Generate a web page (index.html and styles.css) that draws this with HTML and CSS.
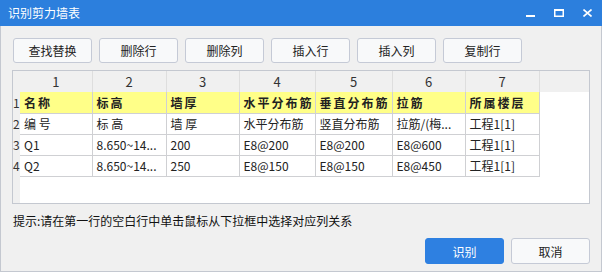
FILE: index.html
```html
<!DOCTYPE html>
<html lang="zh-CN">
<head>
  <meta charset="UTF-8">
  <title>识别剪力墙表</title>
  <link rel="stylesheet" href="styles.css">
</head>
<body>

  <div class="window">

    <!-- Title bar -->
    <div class="titlebar">
      <span class="title">识别剪力墙表</span>
      <div class="controls">
        <svg width="9" height="3" viewBox="0 0 9 3"><rect x="0" y="0" width="9" height="2" fill="#fff"/></svg>
        <svg width="10" height="8" viewBox="0 0 10 8"><rect x="0.75" y="0.75" width="8.5" height="6.5" fill="none" stroke="#fff" stroke-width="1.5"/><rect x="0" y="0" width="10" height="2" fill="#fff"/></svg>
        <svg width="9" height="8" viewBox="0 0 9 8"><path d="M0.5 0.5 L8.5 7.5 M8.5 0.5 L0.5 7.5" stroke="#fff" stroke-width="1.6"/></svg>
      </div>
    </div>

    <div class="content">

      <!-- Toolbar -->
      <div class="toolbar">
        <button class="btn">查找替换</button>
        <button class="btn">删除行</button>
        <button class="btn">删除列</button>
        <button class="btn">插入行</button>
        <button class="btn">插入列</button>
        <button class="btn">复制行</button>
      </div>

      <!-- Grid -->
      <div class="grid">
        <table class="sheet">
          <colgroup>
            <col class="c-num">
            <col style="width:72px">
            <col style="width:74px">
            <col style="width:73px">
            <col style="width:76px">
            <col style="width:77px">
            <col style="width:73px">
            <col style="width:74px">
          </colgroup>
          <tr class="head">
            <th class="num"></th>
            <th>1</th><th>2</th><th>3</th><th>4</th><th>5</th><th>6</th><th>7</th>
          </tr>
          <tr class="pick">
            <td class="num">1</td>
            <td>名称</td><td>标高</td><td>墙厚</td><td>水平分布筋</td><td>垂直分布筋</td><td>拉筋</td><td>所属楼层</td>
          </tr>
          <tr>
            <td class="num">2</td>
            <td>编 号</td><td>标 高</td><td>墙 厚</td><td>水平分布筋</td><td>竖直分布筋</td><td>拉筋/(梅...</td><td>工程1[1]</td>
          </tr>
          <tr>
            <td class="num">3</td>
            <td>Q1</td><td>8.650~14...</td><td>200</td><td>E8@200</td><td>E8@200</td><td>E8@600</td><td>工程1[1]</td>
          </tr>
          <tr>
            <td class="num">4</td>
            <td>Q2</td><td>8.650~14...</td><td>250</td><td>E8@150</td><td>E8@150</td><td>E8@450</td><td>工程1[1]</td>
          </tr>
        </table>
      </div>

      <p class="hint">提示:请在第一行的空白行中单击鼠标从下拉框中选择对应列关系</p>

      <!-- Footer -->
      <div class="footer">
        <button class="btn primary">识别</button>
        <button class="btn">取消</button>
      </div>

    </div>
  </div>

</body>
</html>
```

FILE: styles.css
```css
/* Basic */
* {
  box-sizing: border-box;
}
body {
  margin: 0;
  background: #fff;
  font-family: "Noto Sans CJK SC", "Liberation Sans", sans-serif;
  color: #222;
}

/* Window */
.window {
  width: 602px;
  height: 272px;
  border: 1px solid #c4c8d0;
  border-top: none;
  background: #f0f0f0;
  display: flex;
  flex-direction: column;
}
.titlebar {
  height: 26px;
  margin: 0 -1px;
  background: #2c7fdd;
  color: #fff;
  display: flex;
  align-items: center;
  justify-content: space-between;
  padding: 0 10px 0 8px;
}
.title {
  font-size: 12px;
  line-height: 1;
}
.controls {
  display: flex;
  align-items: center;
  gap: 19px;
}
.controls svg:first-child {
  margin-top: 7px;
}

/* Content */
.content {
  flex: 1;
  padding: 12px 11px 0 11px;
  display: flex;
  flex-direction: column;
}

/* Buttons */
.btn {
  height: 25px;
  width: 79px;
  border: 1px solid #c5cad6;
  border-radius: 3px;
  background: #f8f9fa;
  font-family: inherit;
  font-size: 12px;
  color: #222;
  padding: 0;
}
.btn.primary {
  background: #2e80e1;
  border-color: #2e80e1;
  color: #fff;
}
.toolbar {
  display: flex;
  gap: 7px;
  padding-left: 1px;
}

/* Grid */
.grid {
  margin-top: 7px;
  height: 134px;
  border: 1px solid #c4c8d0;
  background:
    linear-gradient(to bottom, #f0f0f0 21px, transparent 21px),
    linear-gradient(to right, #f0f0f0 7px, #fff 7px);
  overflow: hidden;
}
.sheet {
  border-collapse: collapse;
  table-layout: fixed;
  width: 526px;
  font-size: 12px;
}
.sheet .c-num {
  width: 7px;
}
.sheet th,
.sheet td {
  height: 21px;
  padding: 0 0 0 4px;
  border-right: 1px solid #cfd0d3;
  border-bottom: 1px solid #cfd0d3;
  white-space: nowrap;
  overflow: hidden;
  text-align: left;
  font-weight: normal;
}
.sheet .head th {
  text-align: center;
  padding: 0;
  color: #333;
  font-size: 13px;
  background: #f0f0f0;
  border-bottom: none;
  border-right-color: #dedede;
}
.sheet .num {
  padding: 0;
  border: none;
  background: #f0f0f0;
  color: #333;
  text-align: left;
}
.sheet td.num {
  font-size: 12px;
}
.sheet .pick td {
  background: #ffff88;
  font-weight: bold;
  letter-spacing: 2px;
}
.sheet .pick td.num {
  background: #f0f0f0;
  font-weight: normal;
  letter-spacing: 0;
}

/* Hint + footer */
.hint {
  margin: 9px 0 0 1px;
  font-size: 12px;
  line-height: 16px;
  color: #111;
}
.footer {
  display: flex;
  justify-content: flex-end;
  gap: 7px;
  margin-top: 9px;
}
.footer .btn {
  height: 26px;
}
```
